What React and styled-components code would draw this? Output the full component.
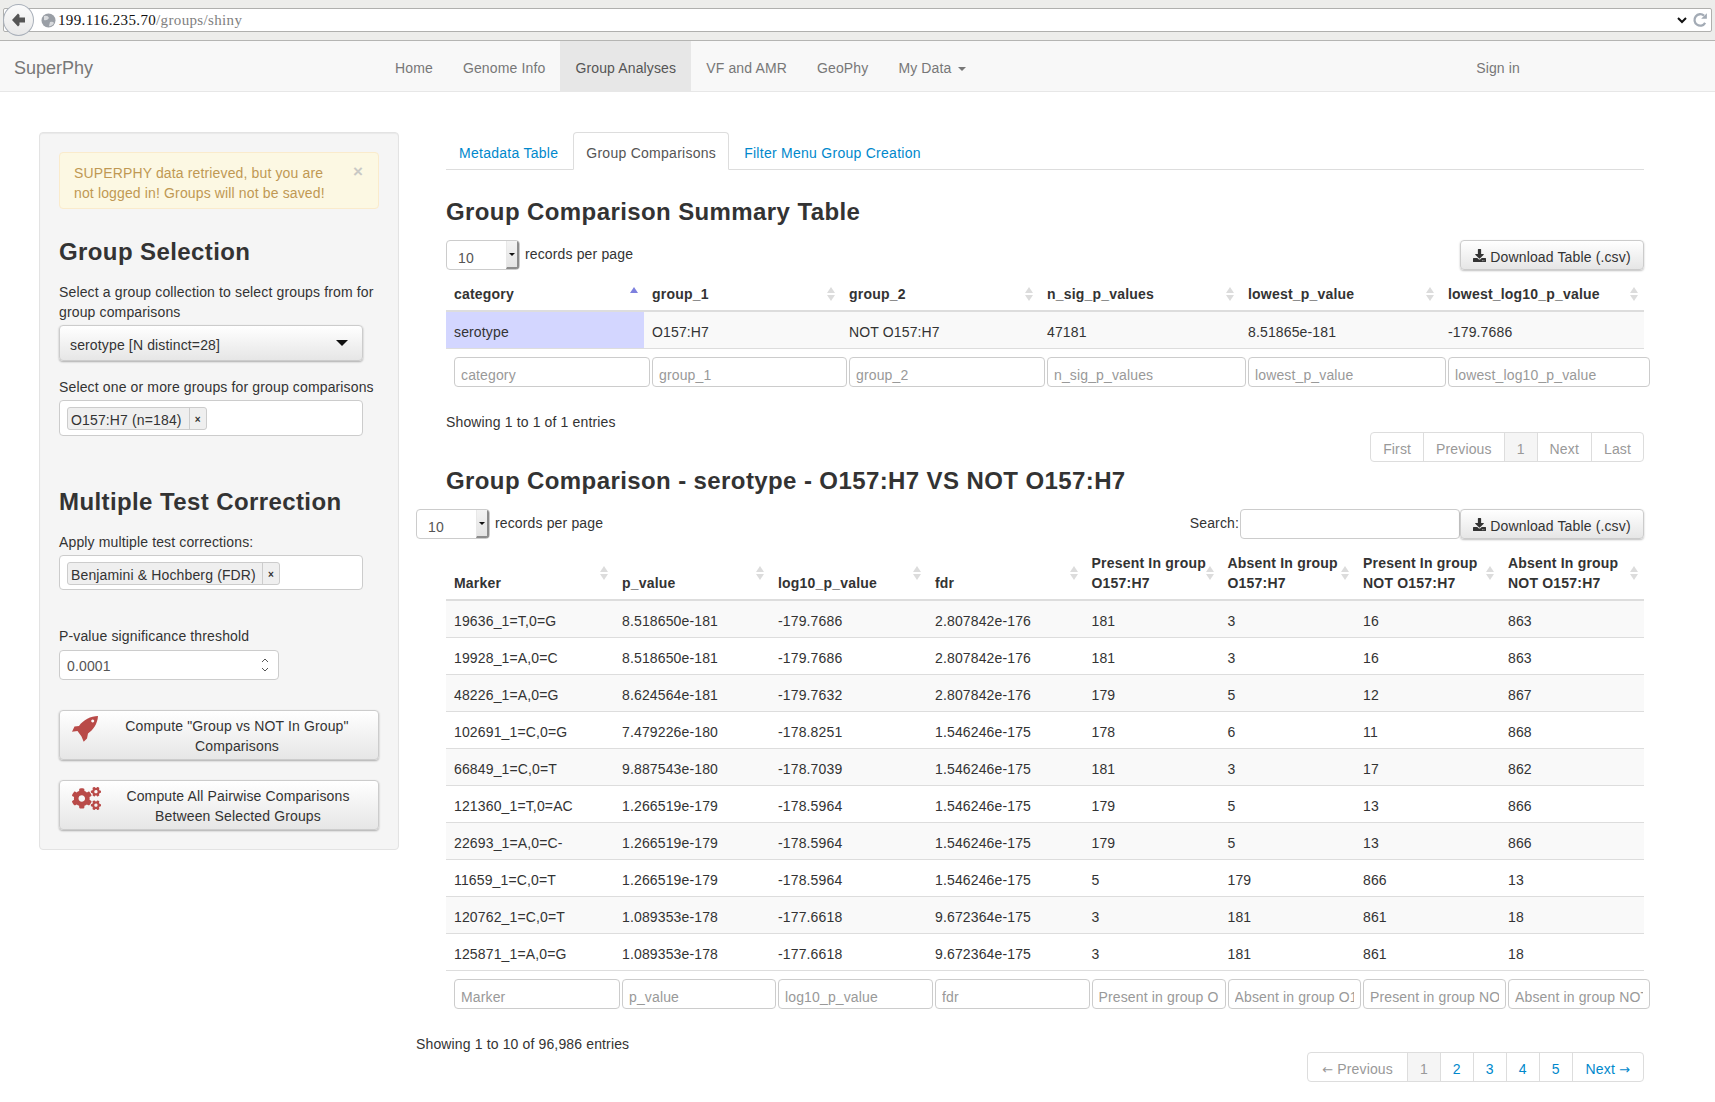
import React from 'react';
import styled, { createGlobalStyle } from 'styled-components';
import { FaCogs, FaDownload } from 'react-icons/fa';

const GlobalStyle = createGlobalStyle`
  html, body {
    margin: 0;
    padding: 0;
    background: #fff;
    font-family: "Liberation Sans", Arial, sans-serif;
    font-size: 14px;
    line-height: 20px;
    letter-spacing: 0.14px;
    color: #333;
  }
  * { box-sizing: border-box; }
`;

/* browser chrome */
const Chrome = styled.div`
  height: 41px;
  background: #ededeb;
  border-bottom: 1px solid #b5b5b3;
  padding: 8px 3px 0 3px;
  position: relative;
`;
const AddressBar = styled.div`
  height: 24px;
  background: #fff;
  border: 1px solid #b0b0ae;
  border-radius: 2px;
  display: flex;
  align-items: center;
  padding-left: 37px;
  padding-right: 3px;
`;
const BackButton = styled.div`
  position: absolute;
  left: 3px;
  top: 4px;
  width: 31px;
  height: 32px;
  border-radius: 50%;
  background: linear-gradient(#fbfbfb, #e8e8e8);
  border: 1px solid #a9b0ba;
  display: flex;
  align-items: center;
  justify-content: center;
`;
const Url = styled.div`
  font-family: "Liberation Serif", serif;
  font-size: 15px;
  letter-spacing: 0.35px;
  color: #111;
  margin-left: 2px;
  span { color: #808080; }
`;
const ChromeIcons = styled.div`
  margin-left: auto;
  display: flex;
  align-items: center;
  gap: 4px;
`;

/* navbar */
const Navbar = styled.nav`
  height: 51px;
  background: #f8f8f8;
  border-bottom: 1px solid #e7e7e7;
  display: flex;
  align-items: stretch;
`;
const Brand = styled.a`
  width: 380px;
  padding: 17px 0 0 14px;
  font-size: 18px;
  line-height: 20px;
  letter-spacing: 0;
  color: #777;
`;
const NavLink = styled.a`
  padding: 17px 15px 0;
  line-height: 20px;
  color: ${p => (p.$active ? '#555' : '#777')};
  background: ${p => (p.$active ? '#e7e7e7' : 'transparent')};
`;
const NavRight = styled.div`
  margin-left: auto;
  margin-right: 180px;
  display: flex;
`;
const Caret = styled.span`
  display: inline-block;
  width: 0;
  height: 0;
  margin-left: 6px;
  vertical-align: middle;
  border-top: 4px solid #777;
  border-left: 4px solid transparent;
  border-right: 4px solid transparent;
`;

/* page layout */
const Main = styled.main`
  display: flex;
  align-items: flex-start;
  padding: 40px 71px 21px 39px;
  gap: 47px;
`;
const Sidebar = styled.aside`
  flex: 0 0 360px;
  background: #f5f5f5;
  border: 1px solid #e3e3e3;
  border-radius: 4px;
  padding: 19px;
  box-shadow: inset 0 1px 1px rgba(0, 0, 0, 0.05);
`;
const Content = styled.section`
  flex: 1;
  min-width: 0;
`;

const Alert = styled.div`
  position: relative;
  height: 57px;
  background: #fcf8e3;
  border: 1px solid #faebcc;
  border-radius: 4px;
  padding: 10px 40px 0 14px;
  color: #c09853;
`;
const AlertClose = styled.span`
  position: absolute;
  right: 15px;
  top: 9px;
  font-size: 17px;
  font-weight: bold;
  color: #c9c9c5;
`;
const Heading = styled.h3`
  margin: ${p => p.$top}px 0 0;
  font-size: 24px;
  line-height: 26px;
  font-weight: bold;
  letter-spacing: 0.4px;
  color: #333;
`;
const Label = styled.div`
  margin-top: ${p => p.$top}px;
`;
const DropButton = styled.div`
  margin-top: 3px;
  width: 304px;
  height: 36px;
  border: 1px solid #ccc;
  border-radius: 4px;
  background: linear-gradient(#fff, #e6e6e6);
  box-shadow: 0 1px 2px rgba(0, 0, 0, 0.3);
  padding: 9px 11px 0 10px;
  display: flex;
  justify-content: space-between;
`;
const DropCaret = styled.span`
  width: 0;
  height: 0;
  margin-top: 5px;
  margin-right: 3px;
  border-top: 6px solid #111;
  border-left: 6px solid transparent;
  border-right: 6px solid transparent;
`;
const TokenInput = styled.div`
  margin-top: 3px;
  width: 304px;
  height: ${p => p.$h}px;
  background: #fff;
  border: 1px solid #ccc;
  border-radius: 4px;
  padding: 6px 7px;
  display: flex;
  align-items: flex-start;
`;
const Token = styled.div`
  display: flex;
  height: 23px;
  line-height: 24px;
  background: #efefef;
  border: 1px solid #ccc;
  border-radius: 3px;
`;
const TokenText = styled.span`
  padding: 0 3px;
  margin-right: ${p => p.$gap}px;
`;
const TokenRemove = styled.span`
  width: 17px;
  border-left: 1px solid #ccc;
  text-align: center;
  font-size: 10px;
  font-weight: bold;
  color: #333;
`;
const NumberBox = styled.div`
  margin-top: 4px;
  width: 220px;
  height: 30px;
  background: #fff;
  border: 1px solid #ccc;
  border-radius: 4px;
  padding: 5px 7px 0 7px;
  color: #555;
  display: flex;
  justify-content: space-between;
`;
const Spinner = styled.svg`
  margin-top: 1px;
  margin-right: 2px;
`;
const ActionButton = styled.div`
  margin-top: ${p => p.$top}px;
  height: 50px;
  position: relative;
  border: 1px solid #ccc;
  border-radius: 4px;
  background: linear-gradient(#fff, #e6e6e6);
  box-shadow: 0 1px 2px rgba(0, 0, 0, 0.3);
  padding: 5px 0 0 ${p => p.$left}px;
  text-align: center;
`;
const ActionIcon = styled.span`
  position: absolute;
  left: 12px;
  top: ${p => p.$top}px;
  color: #b94a48;
  font-size: ${p => p.$size}px;
  line-height: 0;
`;

/* tabs */
const Tabs = styled.ul`
  margin: 0;
  padding: 0;
  list-style: none;
  display: flex;
  height: 38px;
  border-bottom: 1px solid #ddd;
  gap: 2px;
  letter-spacing: 0.27px;
`;
const Tab = styled.li`
  height: 38px;
  padding: 10px 12px 0;
  border: 1px solid ${p => (p.$active ? '#ddd' : 'transparent')};
  border-bottom-color: ${p => (p.$active ? '#fff' : 'transparent')};
  border-radius: 4px 4px 0 0;
  color: ${p => (p.$active ? '#555' : '#0088cc')};
  background: ${p => (p.$active ? '#fff' : 'transparent')};
`;

/* datatable parts */
const Toolbar = styled.div`
  margin-top: ${p => p.$top}px;
  margin-left: ${p => p.$left || 0}px;
  height: 30px;
  display: flex;
  align-items: flex-start;
`;
const PageSize = styled.div`
  width: 74px;
  height: 30px;
  border: 1px solid #ccc;
  border-radius: 4px;
  background: #fff;
  display: flex;
  justify-content: space-between;
  overflow: hidden;
  color: #555;
  padding-left: 11px;
  line-height: 34px;
`;
const PageSizeArrow = styled.span`
  width: 13px;
  height: 100%;
  background: linear-gradient(#f3f3f3, #e4e4e4);
  border-left: 1px solid #e8e8e8;
  border-right: 2px solid #8c8c8c;
  border-bottom: 2px solid #8c8c8c;
  display: flex;
  align-items: center;
  justify-content: center;
  &::after {
    content: '';
    width: 0;
    height: 0;
    border-top: 3px solid #111;
    border-left: 3px solid transparent;
    border-right: 3px solid transparent;
  }
`;
const PerPage = styled.span`
  margin-left: 5px;
  line-height: 29px;
`;
const Spacer = styled.div`
  margin-left: auto;
`;
const SearchLabel = styled.span`
  line-height: 28px;
  margin-right: 1px;
`;
const SearchInput = styled.input`
  width: 220px;
  height: 30px;
  border: 1px solid #ccc;
  border-radius: 4px;
  outline: none;
`;
const DownloadButton = styled.div`
  width: 184px;
  height: 30px;
  border: 1px solid #ccc;
  border-radius: 4px;
  background: linear-gradient(#fff, #e6e6e6);
  box-shadow: 0 1px 2px rgba(0, 0, 0, 0.25);
  display: flex;
  align-items: center;
  justify-content: center;
  gap: 4px;
  padding-top: 3px;
  font-size: 14px;
  svg { font-size: 13px; margin-top: -2px; }
`;

const Table = styled.table`
  margin-top: 6px;
  width: 100%;
  table-layout: fixed;
  border-collapse: separate;
  border-spacing: 0;
`;
const Col = styled.col`
  width: ${p => p.$w}px;
`;
const Th = styled.th`
  position: relative;
  padding: 8px 8px 6px;
  text-align: left;
  vertical-align: bottom;
  font-weight: bold;
  letter-spacing: 0.2px;
  color: #333;
  white-space: nowrap;
  border-bottom: 2px solid #ddd;
`;
const SortIcon = styled.svg`
  position: absolute;
  right: 5px;
  top: 50%;
  margin-top: -9px;
`;
const Tr = styled.tr`
  background: ${p => (p.$odd ? '#f9f9f9' : '#fff')};
`;
const Td = styled.td`
  padding: 10px 8px 6px;
  border-bottom: 1px solid #ddd;
  white-space: nowrap;
  background: ${p => (p.$sorted ? '#d3d6ff' : 'transparent')};
`;
const FilterCell = styled.td`
  padding: 8px 0 8px 8px;
`;
const FilterInput = styled.input`
  display: block;
  width: calc(100% + 6px);
  height: 30px;
  border: 1px solid #ccc;
  border-radius: 4px;
  padding: 5px 6px 0;
  font-family: inherit;
  font-size: 14px;
  letter-spacing: 0.14px;
  outline: none;
  &::placeholder { color: #999; opacity: 1; }
`;
const Info = styled.div`
  margin-top: 17px;
  margin-left: ${p => p.$left || 0}px;
`;
const PagerRow = styled.div`
  margin-top: ${p => p.$top}px;
  display: flex;
  justify-content: flex-end;
`;
const Pager = styled.div`
  display: flex;
  height: 30px;
  border: 1px solid #ddd;
  border-radius: 4px;
  background: #fff;
`;
const PageItem = styled.span`
  padding: 6px ${p => p.$pad}px 0;
  line-height: 20px;
  border-left: ${p => (p.$first ? '0' : '1px solid #ddd')};
  color: ${p => (p.$link ? '#0088cc' : '#999')};
  background: ${p => (p.$current ? '#f5f5f5' : 'transparent')};
`;
const PagerArrow = styled.span`
  font-family: "DejaVu Sans", sans-serif;
  font-size: 13px;
`;

const Sort = ({ asc }) => (
  <SortIcon width="10" height="18" viewBox="0 0 10 18">
    <path d="M5 3 L9 9 L1 9 Z" fill={asc ? '#7d80de' : '#dcdcdc'} />
    {!asc && <path d="M1 11 L9 11 L5 17 Z" fill="#dcdcdc" />}
  </SortIcon>
);

const summaryCols = [198, 197, 198, 201, 200, 204];
const summaryHead = ['category', 'group_1', 'group_2', 'n_sig_p_values', 'lowest_p_value', 'lowest_log10_p_value'];
const summaryRow = ['serotype', 'O157:H7', 'NOT O157:H7', '47181', '8.51865e-181', '-179.7686'];

const markerCols = [168, 156, 157, 156.5, 136, 135.5, 145, 144];
const markerHead = [
  'Marker', 'p_value', 'log10_p_value', 'fdr',
  ['Present In group', 'O157:H7'], ['Absent In group', 'O157:H7'],
  ['Present In group', 'NOT O157:H7'], ['Absent In group', 'NOT O157:H7'],
];
const markerFilters = [
  'Marker', 'p_value', 'log10_p_value', 'fdr',
  'Present in group O157:H7', 'Absent in group O157:H7',
  'Present in group NOT O157:H7', 'Absent in group NOT O157:H7',
];
const markerRows = [
  ['19636_1=T,0=G', '8.518650e-181', '-179.7686', '2.807842e-176', '181', '3', '16', '863'],
  ['19928_1=A,0=C', '8.518650e-181', '-179.7686', '2.807842e-176', '181', '3', '16', '863'],
  ['48226_1=A,0=G', '8.624564e-181', '-179.7632', '2.807842e-176', '179', '5', '12', '867'],
  ['102691_1=C,0=G', '7.479226e-180', '-178.8251', '1.546246e-175', '178', '6', '11', '868'],
  ['66849_1=C,0=T', '9.887543e-180', '-178.7039', '1.546246e-175', '181', '3', '17', '862'],
  ['121360_1=T,0=AC', '1.266519e-179', '-178.5964', '1.546246e-175', '179', '5', '13', '866'],
  ['22693_1=A,0=C-', '1.266519e-179', '-178.5964', '1.546246e-175', '179', '5', '13', '866'],
  ['11659_1=C,0=T', '1.266519e-179', '-178.5964', '1.546246e-175', '5', '179', '866', '13'],
  ['120762_1=C,0=T', '1.089353e-178', '-177.6618', '9.672364e-175', '3', '181', '861', '18'],
  ['125871_1=A,0=G', '1.089353e-178', '-177.6618', '9.672364e-175', '3', '181', '861', '18'],
];

const Download = () => (
  <DownloadButton>
    <FaDownload />
    Download Table (.csv)
  </DownloadButton>
);

const App = () => {
  return (
    <>
      <GlobalStyle />
      <Chrome>
        <BackButton>
          <svg width="15" height="14" viewBox="0 0 15 14">
            <path d="M7 0.5 L1 7 L7 13.5 L8.5 12 L8.5 9.5 L14 9.5 L14 4.5 L8.5 4.5 L8.5 2 Z" fill="#555" />
          </svg>
        </BackButton>
        <AddressBar>
          <svg width="15" height="15" viewBox="0 0 15 15">
            <circle cx="7.5" cy="7.5" r="7" fill="#9a9fa6" />
            <path d="M3 3 Q7 2 8 5 Q6 8 3 7 Z M9 9 Q12 8 13 10 Q11 14 8 13 Z" fill="#d9dbde" />
          </svg>
          <Url>199.116.235.70<span>/groups/shiny</span></Url>
          <ChromeIcons>
            <svg width="12" height="12" viewBox="0 0 12 12">
              <path d="M2 4 L6 8 L10 4" fill="none" stroke="#111" strokeWidth="2" />
            </svg>
            <svg width="16" height="16" viewBox="0 0 14 14">
              <path d="M11.5 9.5 A5 5 0 1 1 10.5 3.2" fill="none" stroke="#a3abb5" strokeWidth="2" />
              <path d="M8 6 L13 6 L13 1 Z" fill="#a3abb5" />
            </svg>
          </ChromeIcons>
        </AddressBar>
      </Chrome>

      <Navbar>
        <Brand>SuperPhy</Brand>
        <NavLink>Home</NavLink>
        <NavLink>Genome Info</NavLink>
        <NavLink $active>Group Analyses</NavLink>
        <NavLink>VF and AMR</NavLink>
        <NavLink>GeoPhy</NavLink>
        <NavLink>My Data<Caret /></NavLink>
        <NavRight><NavLink>Sign in</NavLink></NavRight>
      </Navbar>

      <Main>
        <Sidebar>
          <Alert>
            <AlertClose>×</AlertClose>
            SUPERPHY data retrieved, but you are not logged in! Groups will not be saved!
          </Alert>

          <Heading $top={30}>Group Selection</Heading>
          <Label $top={17}>Select a group collection to select groups from for group comparisons</Label>
          <DropButton>
            serotype [N distinct=28]
            <DropCaret />
          </DropButton>
          <Label $top={16}>Select one or more groups for group comparisons</Label>
          <TokenInput $h={36}>
            <Token>
              <TokenText $gap={4}>O157:H7 (n=184)</TokenText>
              <TokenRemove>×</TokenRemove>
            </Token>
          </TokenInput>

          <Heading $top={53}>Multiple Test Correction</Heading>
          <Label $top={17}>Apply multiple test corrections:</Label>
          <TokenInput $h={35}>
            <Token>
              <TokenText $gap={3}>Benjamini &amp; Hochberg (FDR)</TokenText>
              <TokenRemove>×</TokenRemove>
            </Token>
          </TokenInput>
          <Label $top={36}>P-value significance threshold</Label>
          <NumberBox>
            0.0001
            <Spinner width="8" height="16" viewBox="0 0 8 16">
              <path d="M1 5 L4 2 L7 5 M1 11 L4 14 L7 11" fill="none" stroke="#555" strokeWidth="1" />
            </Spinner>
          </NumberBox>

          <ActionButton $top={30} $left={36}>
            <ActionIcon $top={5} $size={26}>
              <svg width="26" height="26" viewBox="0 0 26 26">
                <path
                  fillRule="evenodd"
                  fill="currentColor"
                  d="M26 0 C19 0 11 4 7 10 L2.5 10.5 L0 15.7 L5.5 15 L9.5 20.5 L11.7 25.7 L15 22.5 L16 17.5 C21 14 25.5 8 26 0 Z M20.7 3.5 a1.5 1.5 0 1 0 0.01 0 Z"
                />
              </svg>
            </ActionIcon>
            Compute "Group vs NOT In Group" Comparisons
          </ActionButton>
          <ActionButton $top={20} $left={38}>
            <ActionIcon $top={3} $size={29}><FaCogs /></ActionIcon>
            Compute All Pairwise Comparisons Between Selected Groups
          </ActionButton>
        </Sidebar>

        <Content>
          <Tabs>
            <Tab>Metadata Table</Tab>
            <Tab $active>Group Comparisons</Tab>
            <Tab>Filter Menu Group Creation</Tab>
          </Tabs>

          <Heading $top={29}>Group Comparison Summary Table</Heading>
          <Toolbar $top={15}>
            <PageSize>10<PageSizeArrow /></PageSize>
            <PerPage>records per page</PerPage>
            <Spacer />
            <Download />
          </Toolbar>
          <Table>
            <colgroup>
              {summaryCols.map((w, i) => <Col key={i} $w={w} />)}
            </colgroup>
            <thead>
              <tr>
                {summaryHead.map((h, i) => (
                  <Th key={h}>{h}<Sort asc={i === 0} /></Th>
                ))}
              </tr>
            </thead>
            <tbody>
              <Tr $odd>
                {summaryRow.map((c, i) => <Td key={i} $sorted={i === 0}>{c}</Td>)}
              </Tr>
            </tbody>
            <tfoot>
              <tr>
                {summaryHead.map(h => (
                  <FilterCell key={h}><FilterInput placeholder={h} /></FilterCell>
                ))}
              </tr>
            </tfoot>
          </Table>
          <Info>Showing 1 to 1 of 1 entries</Info>
          <PagerRow $top={0}>
            <Pager>
              <PageItem $first $pad={12}>First</PageItem>
              <PageItem $pad={12}>Previous</PageItem>
              <PageItem $current $pad={12}>1</PageItem>
              <PageItem $pad={12}>Next</PageItem>
              <PageItem $pad={12}>Last</PageItem>
            </Pager>
          </PagerRow>

          <Heading $top={6}>Group Comparison - serotype - O157:H7 VS NOT O157:H7</Heading>
          <Toolbar $top={15} $left={-30}>
            <PageSize>10<PageSizeArrow /></PageSize>
            <PerPage>records per page</PerPage>
            <Spacer />
            <SearchLabel>Search:</SearchLabel>
            <SearchInput />
            <Download />
          </Toolbar>
          <Table>
            <colgroup>
              {markerCols.map((w, i) => <Col key={i} $w={w} />)}
            </colgroup>
            <thead>
              <tr>
                {markerHead.map((h, i) => (
                  <Th key={i}>
                    {Array.isArray(h) ? <>{h[0]}<br />{h[1]}</> : h}
                    <Sort />
                  </Th>
                ))}
              </tr>
            </thead>
            <tbody>
              {markerRows.map((row, r) => (
                <Tr key={r} $odd={r % 2 === 0}>
                  {row.map((c, i) => <Td key={i}>{c}</Td>)}
                </Tr>
              ))}
            </tbody>
            <tfoot>
              <tr>
                {markerFilters.map(h => (
                  <FilterCell key={h}><FilterInput placeholder={h} /></FilterCell>
                ))}
              </tr>
            </tfoot>
          </Table>
          <Info $left={-30}>Showing 1 to 10 of 96,986 entries</Info>
          <PagerRow $top={-2}>
            <Pager>
              <PageItem $first $pad={14}><PagerArrow>←</PagerArrow> Previous</PageItem>
              <PageItem $current $pad={12}>1</PageItem>
              <PageItem $link $pad={12}>2</PageItem>
              <PageItem $link $pad={12}>3</PageItem>
              <PageItem $link $pad={12}>4</PageItem>
              <PageItem $link $pad={12}>5</PageItem>
              <PageItem $link $pad={13}>Next <PagerArrow>→</PagerArrow></PageItem>
            </Pager>
          </PagerRow>
        </Content>
      </Main>
    </>
  );
};

export default App;
